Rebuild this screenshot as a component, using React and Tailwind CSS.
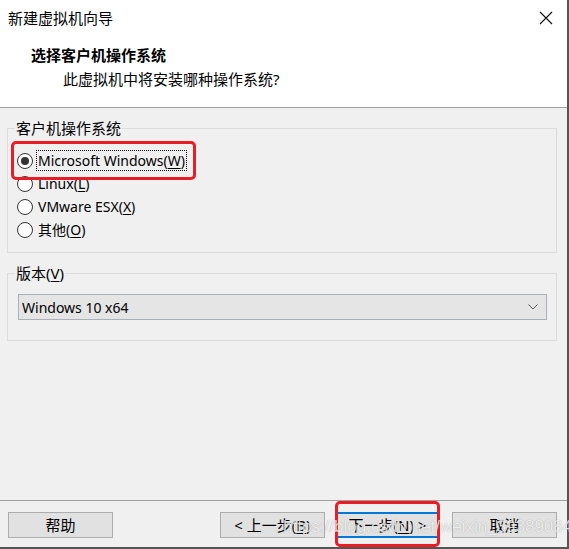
/**
 * NewVmWizard -- "新建虚拟机向导" guest OS selection step.
 */

const sans = 'font-["Noto_Sans","Noto_Sans_CJK_SC",sans-serif]';

function Radio({ checked, label, mnemonic }) {
  return (
    <div className="flex items-center h-[23px]">
      <span className="w-4 h-4 rounded-full border border-[#333] bg-white flex items-center justify-center shrink-0">
        {checked && <span className="w-2 h-2 rounded-full bg-[#333]" />}
      </span>
      <span
        className={`ml-[3px] px-[1px] leading-[19px] text-[14px] whitespace-nowrap ${
          checked ? 'border border-dotted border-black' : 'border border-transparent'
        }`}
      >
        {label}(<span className="underline underline-offset-2">{mnemonic}</span>)
      </span>
    </div>
  );
}

function Button({ children, focused }) {
  return (
    <button
      className={`w-[105px] h-[26px] shrink-0 bg-[#e1e1e1] text-[15px] leading-none text-black flex items-center justify-center whitespace-nowrap ${
        focused ? 'border-2 border-[#0078d7]' : 'border border-[#adadad]'
      }`}
    >
      {children}
    </button>
  );
}

export default function App() {
  return (
    <div className={`${sans} relative w-[569px] h-[549px] bg-white overflow-hidden text-[15px] text-black`}>
      <div className="flex flex-col w-[569px] h-[549px] border-r-2 border-b-2 border-[#555]">
        {/* Header -- white */}
        <div className="h-[108px] bg-white border-b border-[#a0a0a0] shrink-0">
          <div className="flex items-center justify-between h-[36px] pl-[8px] pr-[13px]">
            <span className="text-[15px] leading-none">新建虚拟机向导</span>
            <svg width="14" height="14" viewBox="0 0 14 14" className="mr-[1px]">
              <path d="M1 1 L13 13 M13 1 L1 13" stroke="#111" strokeWidth="1.1" fill="none" />
            </svg>
          </div>
          <div className="pl-[31px] mt-[8px] font-bold text-[15px] leading-[22px]">选择客户机操作系统</div>
          <div className="pl-[63px] mt-[2px] text-[15px] leading-[22px]">此虚拟机中将安装哪种操作系统?</div>
        </div>

        {/* Body */}
        <div className="flex-1 bg-[#f0f0f0] flex flex-col">
          <fieldset className="ml-[7px] mr-[10px] mt-[10px] border border-[#dcdcdc] pb-[11px]">
            <legend className="ml-[7px] px-[1px] leading-[20px]">客户机操作系统</legend>
            <div className="pl-[9px] pt-[11px]">
              <Radio checked label="Microsoft Windows" mnemonic="W" />
              <Radio label="Linux" mnemonic="L" />
              <Radio label="VMware ESX" mnemonic="X" />
              <Radio label="其他" mnemonic="O" />
            </div>
          </fieldset>

          <fieldset className="ml-[7px] mr-[10px] mt-[10px] border border-[#dcdcdc] pb-[20px]">
            <legend className="ml-[7px] px-[1px] leading-[20px]">
              版本(<span className="underline underline-offset-2">V</span>)
            </legend>
            <div className="mt-[11px] ml-[10px] mr-[9px] h-[26px] bg-[#e5e5e5] border border-[#a9b0b8] flex items-center justify-between pl-[3px] pr-[8px]">
              <span className="text-[14px]">Windows 10 x64</span>
              <svg width="10" height="6" viewBox="0 0 10 6">
                <path d="M0.5 0.5 L5 5 L9.5 0.5" stroke="#555" strokeWidth="1" fill="none" />
              </svg>
            </div>
          </fieldset>

          <div className="flex-1" />

          {/* Footer buttons */}
          <div className="border-t border-[#a0a0a0] h-[47px] pt-[11px] pl-[8px] pr-[10px] flex">
            <Button>帮助</Button>
            <div className="flex-1" />
            <Button>&lt; 上一步(<span className="underline underline-offset-2">B</span>)</Button>
            <div className="w-[10px] shrink-0" />
            <Button focused>下一步(<span className="underline underline-offset-2">N</span>) &gt;</Button>
            <div className="w-[12px] shrink-0" />
            <Button>取消</Button>
          </div>
        </div>
      </div>

      {/* Red annotation boxes */}
      <div className="absolute left-[11px] top-[141px] w-[185px] h-[39px] border-[3px] border-[#ec1c24] rounded-[5px]" />
      <div className="absolute left-[335px] top-[501px] w-[105px] h-[46px] border-[3px] border-[#ec1c24] rounded-[5px]" />

      {/* Watermark */}
      <div className='absolute left-[283px] top-[514px] font-["Liberation_Sans",sans-serif] text-[17px] text-white/80 [text-shadow:0_0_1px_rgba(0,0,0,0.35)] whitespace-nowrap pointer-events-none'>
        https://blog.csdn.net/weixin_39389084
      </div>
    </div>
  );
}
